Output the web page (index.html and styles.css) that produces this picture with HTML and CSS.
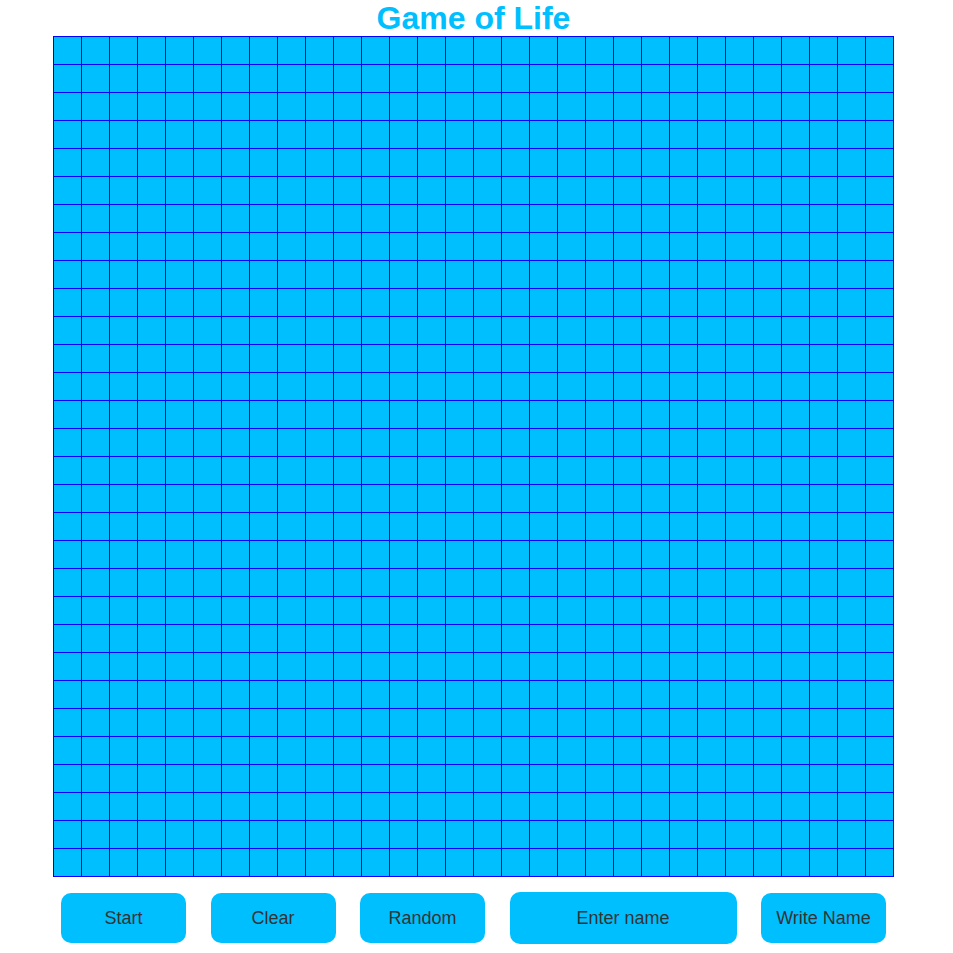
FILE: index.html
```html
<!DOCTYPE html>
<html lang="en">
<head>
  <meta charset="UTF-8">
  <meta name="viewport" content="width=device-width, initial-scale=1.0">
  <title>Game of Life</title>
  <link rel="stylesheet" href="styles.css">
</head>
<body>
  <div class="wrap">
    <h1>Game of Life</h1>

    <!-- 30 x 30 board, cells filled in by the script below -->
    <div id="board" class="board"></div>

    <div class="controls">
      <button class="btn">Start</button>
      <button class="btn">Clear</button>
      <button class="btn">Random</button>
      <input type="text" class="name-input" placeholder="Enter name">
      <button class="btn">Write Name</button>
    </div>
  </div>

  <script>
    const board = document.getElementById('board');
    for (let i = 0; i < 30 * 30; i++) {
      const cell = document.createElement('div');
      cell.className = 'cell';
      board.appendChild(cell);
    }
  </script>
</body>
</html>
```

FILE: styles.css
```css
body {
  font-family: "Liberation Sans", Arial, sans-serif;
  margin: 0;
  padding: 0;
  background: #ffffff;
}
.wrap {
  width: 841px;
  margin-left: 53px;
}
h1 {
  margin: 0;
  font-size: 32px;
  line-height: 36px;
  color: #00bfff;
  text-align: center;
}
.board {
  display: grid;
  grid-template-columns: repeat(30, 28px);
  grid-auto-rows: 28px;
  border-top: 1px solid #0000ff;
  border-left: 1px solid #0000ff;
  width: 840px;
}
.cell {
  background: #00bfff;
  border-right: 1px solid #0000ff;
  border-bottom: 1px solid #0000ff;
}
.controls {
  display: flex;
  align-items: center;
  justify-content: space-between;
  padding: 0 8px;
  margin-top: 15px;
  height: 52px;
}
.btn {
  width: 125px;
  height: 50px;
  background-color: #00bfff;
  color: #333333;
  border: none;
  border-radius: 10px;
  font-family: inherit;
  font-size: 18px;
  cursor: pointer;
}
.name-input {
  box-sizing: border-box;
  width: 227px;
  height: 52px;
  background-color: #00bfff;
  color: #333333;
  border: none;
  border-radius: 10px;
  font-family: inherit;
  font-size: 18px;
  text-align: center;
}
.name-input::placeholder {
  color: #333333;
  opacity: 1;
}
```
